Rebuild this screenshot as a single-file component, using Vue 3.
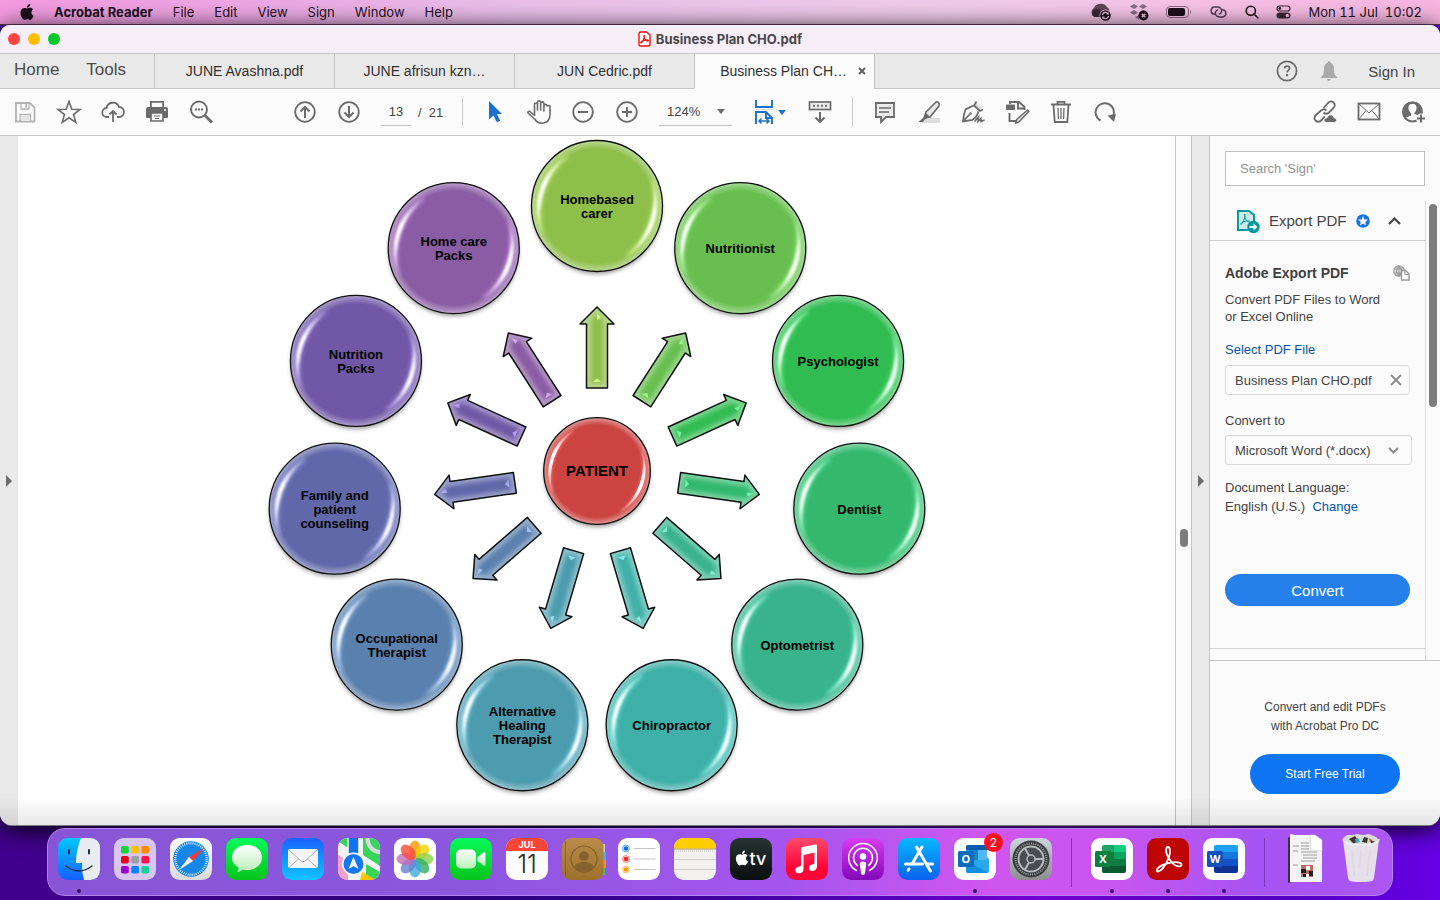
<script setup>
const menus = ['File', 'Edit', 'View', 'Sign', 'Window', 'Help']
const tabs = ['JUNE Avashna.pdf', 'JUNE afrisun kzn…', 'JUN Cedric.pdf']

const nodes = [
  { lines: ['Homebased', 'carer'], color: '#8fbf4b', glow: '#d9ff8a' },
  { lines: ['Nutritionist'], color: '#68bf50', glow: '#a8ff90' },
  { lines: ['Psychologist'], color: '#30bc51', glow: '#7dffa0' },
  { lines: ['Dentist'], color: '#33b86e', glow: '#7dffb8' },
  { lines: ['Optometrist'], color: '#38b38b', glow: '#86ffd8' },
  { lines: ['Chiropractor'], color: '#3fb0a8', glow: '#8cfff6' },
  { lines: ['Alternative', 'Healing', 'Therapist'], color: '#4c9bae', glow: '#9aeaff' },
  { lines: ['Occupational', 'Therapist'], color: '#5a80ae', glow: '#a6d0ff' },
  { lines: ['Family and', 'patient', 'counseling'], color: '#6068a9', glow: '#b0b8ff' },
  { lines: ['Nutrition', 'Packs'], color: '#7058a6', glow: '#c4a8ff' },
  { lines: ['Home care', 'Packs'], color: '#8a5ca4', glow: '#e6b0ff' }
].map((n, i) => {
  const deg = (360 / 11) * i
  const a = (deg * Math.PI) / 180
  return { ...n, deg, x: 265 * Math.sin(a), y: -265 * Math.cos(a) }
})

const petals = ['#ff9500', '#f2d600', '#8fd14f', '#2fae60', '#3fa9e0', '#6a7fd0', '#c06bb5', '#ff4b3a']
const pads = ['#12d636', '#ffbf00', '#ff8a00', '#e5001b', '#9aa0a6', '#ff1250', '#a000d0', '#0a84ff', '#12cf9b']
</script>

<template>
  <div class="desktop">
    <header class="menubar">
      <button class="apple" aria-label="Apple menu">
        <svg width="14" height="16" viewBox="2 0 20 24"><path fill="#1d0f1c" d="M12.152 6.896c-.948 0-2.415-1.078-3.96-1.04-2.04.027-3.91 1.183-4.961 3.014-2.117 3.675-.546 9.103 1.519 12.09 1.013 1.454 2.208 3.09 3.792 3.039 1.52-.065 2.09-.987 3.935-.987 1.831 0 2.35.987 3.96.948 1.637-.026 2.676-1.48 3.676-2.948 1.156-1.688 1.636-3.325 1.662-3.415-.039-.013-3.182-1.221-3.22-4.857-.026-3.04 2.48-4.494 2.597-4.559-1.429-2.09-3.623-2.324-4.39-2.376-2-.156-3.675 1.09-4.61 1.09zM15.53 3.83c.843-1.012 1.4-2.427 1.245-3.83-1.207.052-2.662.805-3.532 1.818-.78.896-1.454 2.338-1.273 3.714 1.338.104 2.715-.688 3.559-1.701" /></svg>
      </button>
      <button class="app-name">Acrobat Reader</button>
      <button v-for="m in menus" :key="m">{{ m }}</button>
      <div class="status">
        <svg width="22" height="18" viewBox="0 0 22 18"><path d="M5 14a5 5 0 0 1-1-9 7 6 0 0 1 13-1 5 5 0 0 1 2 6l-4 4z" fill="#5d4456" /><path d="M2 9a5 4 0 0 1 8-2l5 5-4 2H5a4 4 0 0 1-3-5z" fill="#3a2836" /><circle cx="15.500" cy="12.500" r="6" fill="#f0c6e8" /><circle cx="15.500" cy="12.500" r="5.300" fill="#1d0f1c" /><path d="M12.500 12a3 3 0 0 1 5.500-1.200M18.500 13a3 3 0 0 1-5.500 1.300" fill="none" stroke="#f4c4e8" stroke-width="1.300" /><path d="M18.700 9v2.500h-2.500zM12.300 16v-2.500h2.500z" fill="#f4c4e8" /></svg>
        <svg width="20" height="18" viewBox="0 0 20 18"><g fill="#8d6a85"><path d="M5 1l4 2.500-4 2.500-4-2.500zM14 1l4 2.500-4 2.500-4-2.500zM5 7l4 2.500L5 12 1 9.500zM10 12l-4 2 4 3z" /><path d="M14 7l4 2.500-4 2-4-2z" /></g><circle cx="14.500" cy="12.500" r="5" fill="#1d0f1c" /><path d="M12.700 10.700l3.600 3.600m0-3.600l-3.600 3.600" stroke="#f5bfe5" stroke-width="1.500" /></svg>
        <svg width="26" height="13" viewBox="0 0 26 13"><rect x=".500" y=".500" width="22" height="11" rx="3.500" fill="none" stroke="#8d6581" /><rect x="2" y="2" width="17" height="8" rx="2" fill="#1d0f1c" /><path d="M24 4q2 2 0 4z" fill="#8d6581" /></svg>
        <svg width="19" height="14" viewBox="0 0 19 14" fill="none" stroke="#5b3b53" stroke-width="1.400" stroke-linecap="round"><path d="M5.500 9.300A3.700 3.700 0 0 1 5 2h3.500q3.600.3 4.200 3.300.2 2.900-2.500 3.900" /><path d="M13.500 4.700a3.700 3.700 0 0 1 .500 7.300h-3.500Q6.900 11.700 6.300 8.700q-.2-2.900 2.500-3.900" /></svg>
        <svg width="14" height="14" viewBox="0 0 14 14" fill="none" stroke="#1d0f1c" stroke-width="1.600"><circle cx="5.800" cy="5.800" r="4.600" /><path d="M9 9l4 4" stroke-linecap="round" /></svg>
        <svg width="15" height="14" viewBox="0 0 15 14"><rect x="1" y="1" width="13" height="5" rx="2.500" fill="none" stroke="#3b2437" stroke-width="1.200" /><circle cx="3.800" cy="3.500" r="1.400" fill="#3b2437" /><rect x="0.500" y="7.500" width="14" height="6" rx="3" fill="#3b2437" /><circle cx="11.300" cy="10.500" r="1.700" fill="#f7c0e5" /></svg>
        <time>Mon 11 Jul&nbsp; 10:02</time>
      </div>
    </header>

    <main class="window">
      <div class="titlebar">
        <div class="lights">
          <button class="red" aria-label="Close"></button>
          <button class="amber" aria-label="Minimise"></button>
          <button class="green" aria-label="Zoom window"></button>
        </div>
        <svg width="13" height="16" viewBox="0 0 13 16"><path d="M2.500 1h6l3.500 3v9.500q0 1.500-1.500 1.500h-8Q1 15 1 13.500v-11Q1 1 2.500 1z" fill="#fff" stroke="#f00f0f" stroke-width="1.400" /><path d="M6.300 4.500c-1.200 0 0 3 1.200 4.300 1.300 1.300 3 1.700 3 .8S7.500 8.600 5 9.700s-2.700 2.200-1.900 2.200 3.900-5.500 3.200-7.400z" fill="none" stroke="#f00f0f" stroke-width="1.200" /></svg>
        <h1>Business Plan CHO.pdf</h1>
      </div>

      <nav class="tabs">
        <div class="places"><button>Home</button><button>Tools</button></div>
        <button v-for="t in tabs" :key="t" class="tab">{{ t }}</button>
        <div class="tab active"><button>Business Plan CH…</button>
          <button class="close" aria-label="Close tab"><svg width="8" height="8" viewBox="0 0 8 8"><path d="M1 1l6 6m0-6L1 7" stroke="#5c5c5c" stroke-width="1.800" /></svg></button>
        </div>
        <div class="account">
          <button aria-label="Help"><svg width="22" height="22" viewBox="0 0 22 22" fill="none" stroke="#6a6a6a" stroke-width="1.700"><circle cx="11" cy="11" r="9.600" /><path d="M8.500 8.500q.2-2.300 2.600-2.300 2.500 0 2.500 2.100 0 1.300-1.400 2.200-1.100.7-1.100 2" /><path d="M11.100 14v2.200" stroke-width="2" /></svg></button>
          <button aria-label="Notifications"><svg width="18" height="20" viewBox="0 0 18 20"><path d="M9 0q1.300 0 1.300 1.600Q14 3 14 8q0 5 1.500 6.500L17.500 17H.5l2-2.500Q4 13 4 8q0-5 3.700-6.400Q7.700 0 9 0zM7 18h4q-.3 2-2 2t-2-2z" fill="#a9a9a9" /></svg></button>
          <button class="signin">Sign In</button>
        </div>
      </nav>

      <div class="toolbar">
        <button aria-label="Save"><svg viewBox="0 0 24 24" fill="none" stroke="#b4b4b4" stroke-width="1.800"><path d="M3 3h14l4.500 4.500V21.500H3z" /><path d="M8 3v6h8V3M7 21v-6.500h10.500V21" stroke-width="1.300" /><path d="M13 4v3.500" /><path d="M8 16h9v5H8z" fill="#e4e4e4" stroke="none" /></svg></button>
        <button aria-label="Add to favourites"><svg viewBox="0 0 24 24" fill="none" stroke="#6b6b6b" stroke-width="1.600"><path d="M12 1.500l2.800 7.700 8.200.3-6.500 5 2.300 7.900-6.800-4.600-6.800 4.600 2.300-7.900-6.500-5 8.200-.3z" /></svg></button>
        <button aria-label="Upload"><svg viewBox="0 0 24 24" fill="none" stroke="#6b6b6b" stroke-width="1.800"><path d="M8 17H6a4.500 4.500 0 0 1-.5-9 6.500 6.500 0 0 1 12.500-1 5 5 0 0 1 0 10h-2" /><path d="M12 22V11M8.500 14.500L12 11l3.500 3.500" /></svg></button>
        <button aria-label="Print"><svg viewBox="0 0 24 24" fill="#6b6b6b"><path d="M5 1h14v6H5z M6.800 2.800V7h10.400V2.800z" fill-rule="evenodd" /><path d="M3 7h18q2 0 2 2v8q0 1-1 1H2q-1 0-1-1V9q0-2 2-2z" /><path d="M6 13h12v8H6z" fill="#fbfbfb" stroke="#6b6b6b" stroke-width="1.600" /><path d="M9 16h6M10 18.500h4" stroke="#6b6b6b" stroke-width="1.200" /><circle cx="20" cy="10" r="1" fill="#fbfbfb" /></svg></button>
        <button aria-label="Find text"><svg viewBox="0 0 24 24" fill="none" stroke="#6b6b6b" stroke-width="1.900"><circle cx="10" cy="9.500" r="8" /><path d="M16 15.500l7 7" stroke-width="2.800" /><path d="M6 9.500h2m1 0h2m1 0h2" /></svg></button>

        <button class="page-up" aria-label="Previous page"><svg viewBox="0 0 24 24" fill="none" stroke="#6b6b6b" stroke-width="1.800"><circle cx="12" cy="12" r="9.800" /><path d="M12 18V7M7.500 11.500L12 7l4.500 4.500" stroke-width="2" /></svg></button>
        <button aria-label="Next page"><svg viewBox="0 0 24 24" fill="none" stroke="#6b6b6b" stroke-width="1.800"><circle cx="12" cy="12" r="9.800" /><path d="M12 6v11M7.500 12.500L12 17l4.500-4.500" stroke-width="2" /></svg></button>
        <div class="pages"><input value="13" aria-label="Page number" /><span>/&nbsp; 21</span></div>
        <i class="rule"></i>

        <button aria-label="Select"><svg viewBox="0 0 24 24"><path d="M6 1v18.500l4.500-4 3.300 6.800 3.400-1.600L14 14h5z" fill="#1d70cc" /></svg></button>
        <button aria-label="Pan"><svg viewBox="0 0 24 24" fill="none" stroke="#6b6b6b" stroke-width="1.600" stroke-linecap="round" stroke-linejoin="round"><path d="M7.500 13V4.500a1.500 1.500 0 0 1 3 0V10 2.500a1.500 1.500 0 0 1 3.200 0V10 3.500a1.500 1.500 0 0 1 3.200 0V11 6a1.500 1.500 0 0 1 3.200 0l2-.5q1 0 .9 1.500V15q-.5 8-8 8.200-5 0-7-3.700L1 13q-.5-2 2-1.500l4.500 4z" /></svg></button>
        <button aria-label="Zoom out"><svg viewBox="0 0 24 24" fill="none" stroke="#6b6b6b" stroke-width="1.800"><circle cx="12" cy="12" r="9.800" /><path d="M7 12h10" stroke-width="2" /></svg></button>
        <button aria-label="Zoom in"><svg viewBox="0 0 24 24" fill="none" stroke="#6b6b6b" stroke-width="1.800"><circle cx="12" cy="12" r="9.800" /><path d="M7 12h10M12 7v10" stroke-width="2" /></svg></button>
        <label class="zoom"><select aria-label="Zoom level"><option>124%</option></select><svg class="caret" viewBox="0 0 8 5"><path d="M0 0h8L4 5z" fill="#6b6b6b" /></svg></label>
        <button class="fit" aria-label="Page fit"><svg viewBox="0 0 24 24" fill="none" stroke="#1d70cc" stroke-width="1.900"><path d="M4 0v7h16V0M4 24V12h10l6 6v6M14 12v6h6" /><path d="M7 21h10M9.500 18.500L7 21l2.500 2.500M14.500 18.500L17 21l-2.500 2.500" stroke-width="1.500" /><path d="M4 9.500h16" stroke="#dcdcdc" stroke-width="1.200" /></svg><svg class="caret" viewBox="0 0 8 5"><path d="M0 0h8L4 5z" fill="#1d70cc" /></svg></button>
        <button aria-label="Page display"><svg viewBox="0 0 24 24" fill="none" stroke="#6b6b6b" stroke-width="1.700"><rect x="1.500" y="2" width="21" height="7.500" fill="#ededed" /><path d="M5 5.700h14" stroke-dasharray="2 2" stroke-width="2" /><path d="M12 12v10M7.500 17.500L12 22l4.500-4.500" stroke-width="2" /></svg></button>
        <i class="rule"></i>

        <button aria-label="Comment"><svg viewBox="0 0 24 24" stroke="#6b6b6b" stroke-width="1.800"><path d="M3 3h18v14h-8l-5 5v-5H3z" fill="#ececec" /><path d="M6 8h12M6 12h10" stroke-width="1.300" /></svg></button>
        <button aria-label="Highlight"><svg viewBox="0 0 24 24"><path d="M7 18h16v5H5z" fill="#dedede" /><path d="M9 12L18.500 2.500q1.500-1.500 3 0t.500 3.500L13 17l-5-1z" fill="#e8e8e8" stroke="#6b6b6b" stroke-width="1.600" /><path d="M8.500 12.500l4.800 4.800-5.300 2-2 2.700H1.500L6 18z" fill="#6b6b6b" /></svg></button>
        <button aria-label="Sign"><svg viewBox="0 0 24 24" fill="none" stroke="#6b6b6b" stroke-width="1.800"><path d="M15 2l6.500 6-3 3-5-5z" fill="#dedede" stroke="none" /><path d="M15.500 1.500l-2.500 4 6 5.500 3-1.500" /><path d="M12.500 5.500L4.500 9.500Q2.800 14 2 21.500l9.500-1.700Q16 17 17.500 11.500M2 21.500l6.500-7" /><circle cx="9.500" cy="13.500" r="1.300" fill="#6b6b6b" stroke="none" /><path d="M13.500 21.500l4-4.500-.5 4.500 3-3v3l3.500-1.500" stroke-width="1.600" /></svg></button>
        <button aria-label="Edit PDF"><svg viewBox="0 0 24 24" fill="none" stroke="#6b6b6b" stroke-width="1.900"><path d="M5 4V2h9l5.500 5v3M13 2v6.500h6M4.500 13v8H11" /><rect x="1" y="4.500" width="9" height="5.500" rx="1" fill="#6b6b6b" stroke="none" /><path d="M22.500 10l1.300 1.500-10 10.500-3 1 1-3.500z" fill="#e8e8e8" stroke-width="1.500" /></svg></button>
        <button aria-label="Delete"><svg viewBox="0 0 24 24" fill="none" stroke="#6b6b6b" stroke-width="1.800"><path d="M2 4.500h20M8.500 4V1.800h7V4M4.500 5l1.200 17h12.600l1.200-17" /><path d="M9 8l.4 11M12 8v11M15 8l-.4 11" stroke-width="1.300" /></svg></button>
        <button aria-label="Rotate"><svg viewBox="0 0 24 24" fill="none" stroke="#6b6b6b" stroke-width="2"><path d="M7.500 20.500a9.200 9.200 0 1 1 12.500-4" /><path d="M14.500 15.500l8.500-1.500-2 8z" fill="#6b6b6b" stroke="none" /></svg></button>

        <div class="share">
          <button aria-label="Share link"><svg viewBox="0 0 24 24" fill="none" stroke="#6b6b6b" stroke-width="1.800"><path d="M10.500 8l4.500-5q3-3 5.500-.5t0 5.500L16 12.500q-3 2.500-5.500 0" /><path d="M13.500 10.500q-2.500-2.500-5.500 0L3 15q-3 3-.5 5.500t5.500 0l4-4" /><path d="M13 22.500q-2.500-.5-2-2.800.5-2.200 3-2 1-3.500 4.200-3 2.800.5 3 3 2.800.3 2.500 2.700-.3 2.100-2.200 2.100z" fill="#6b6b6b" stroke="#fbfbfb" stroke-width="1" /></svg></button>
          <button aria-label="Email"><svg viewBox="0 0 24 24" fill="none" stroke="#6b6b6b" stroke-width="1.800"><rect x="1.500" y="3.500" width="21" height="16" /><path d="M2 4l10 9L22 4M2 19l7-8.500M22 19l-7-8.500" stroke-width="1" /></svg></button>
          <button aria-label="Add people"><svg viewBox="0 0 24 24"><circle cx="11.500" cy="12" r="9.500" fill="#fbfbfb" stroke="#6b6b6b" stroke-width="2" /><path d="M2.500 8a9.500 9.500 0 0 1 18 0v8l-4-.8-3.500-1.700q3-3.500 2.500-6.500-.7-3.200-4-3.200T7.500 7q-.5 3 2.500 6.500v2L4.500 18Q1 14 2.500 8z" fill="#6b6b6b" /><circle cx="20" cy="18.500" r="5" fill="#fbfbfb" /><path d="M20 14.500v8M16 18.500h8" stroke="#6b6b6b" stroke-width="2" /></svg></button>
        </div>
      </div>

      <div class="workspace">
        <button class="rail" aria-label="Open navigation pane"><svg width="6" height="12" viewBox="0 0 6 12"><path d="M0 0l6 6-6 6z" fill="#6b6b6b" /></svg></button>
        <section class="page">
          <svg class="diagram" viewBox="-579 -335 1157 689" role="img" aria-label="Patient care network">
            <defs>
              <filter id="soft1" x="-30%" y="-30%" width="160%" height="160%"><feGaussianBlur stdDeviation="0.9" /></filter>
              <filter id="soft2" x="-50%" y="-50%" width="200%" height="200%"><feGaussianBlur stdDeviation="2" /></filter>
              <radialGradient id="rim"><stop offset=".87" stop-color="#fff" stop-opacity="0" /><stop offset="1" stop-color="#fff" stop-opacity=".42" /></radialGradient>
              <linearGradient id="shine" x1="0" y1="0" x2="0" y2="1"><stop offset="0" stop-color="#fff" stop-opacity=".1" /><stop offset=".35" stop-color="#fff" /><stop offset=".6" stop-color="#fff" stop-opacity=".9" /><stop offset="1" stop-color="#fff" stop-opacity="0" /></linearGradient>
              <path id="crescent" d="M-29-50A59 59 0 0 0-55 26A76 76 0 0 1-29-50z" />
              <path id="arrow" d="M0-164L17-147H10.500V-83H-10.500V-147H-17z" />
            </defs>

            <g v-for="n in nodes" :key="n.lines[0]">
              <g :transform="`rotate(${n.deg})`">
                <use href="#arrow" :fill="n.color" />
                <use href="#arrow" fill="#fff" fill-opacity=".35" />
                <path d="M0-157L7-150H6V-88H-6V-150H-7z" :fill="n.color" filter="url(#soft2)" />
                <path d="M0-93l4 4h-8zM0-158l4 5-4 2z" :fill="n.glow" fill-opacity=".8" />
                <use href="#arrow" fill="none" stroke="#111" stroke-width="1.500" stroke-linejoin="round" />
              </g>
              <g :transform="`translate(${n.x} ${n.y})`">
                <circle r="65" cy="3" fill="#000" fill-opacity=".4" filter="url(#soft2)" />
                <circle r="65.500" :fill="n.color" />
                <circle r="65.500" fill="url(#rim)" />
                <g v-for="turn in [0, 180]" :key="turn" :transform="`rotate(${turn})`">
                  <use href="#crescent" :stroke="n.glow" :fill="n.glow" stroke-width="2" opacity=".6" filter="url(#soft2)" />
                  <use href="#crescent" fill="url(#shine)" filter="url(#soft1)" />
                </g>
                <circle r="65.500" fill="none" stroke="#111" stroke-width="1.300" />
                <text v-for="(line, k) in n.lines" :key="line" y="-2" :dy="(k - (n.lines.length - 1) / 2) * 14 + 7">{{ line }}</text>
              </g>
            </g>

            <circle r="53" cy="3" fill="#000" fill-opacity=".4" filter="url(#soft2)" />
            <circle r="53" fill="#cb4441" />
            <circle r="53" fill="url(#rim)" />
            <g v-for="turn in [0, 180]" :key="turn" :transform="`rotate(${turn}) scale(.81)`">
              <use href="#crescent" fill="#ff8a88" stroke="#ff8a88" stroke-width="2" opacity=".6" filter="url(#soft2)" />
              <use href="#crescent" fill="url(#shine)" filter="url(#soft1)" />
            </g>
            <circle r="53.300" fill="none" stroke="#111" stroke-width="1.300" />
            <text y="5" class="hub">PATIENT</text>
          </svg>
        </section>
        <div class="scroll"><i></i></div>
        <button class="rail right" aria-label="Collapse tools pane"><svg width="6" height="12" viewBox="0 0 6 12"><path d="M0 0l6 6-6 6z" fill="#6b6b6b" /></svg></button>

        <aside>
          <input class="search" placeholder="Search 'Sign'" aria-label="Search tools" />
          <div class="pane">
            <div class="pane-main">
              <button class="export-head">
                <svg width="24" height="24" viewBox="0 0 24 24"><path d="M2 2h11l5 4v15H2z" fill="#cfeaea" stroke="#009b9b" stroke-width="2" /><path d="M9 5c-1.500 0 0 5 1.500 6.500s3.500 2 3.500 1-5-.8-7.500.7-2 2.300-1.400 2.300S10 8.500 9 5z" fill="none" stroke="#009b9b" stroke-width="1" /><circle cx="17.500" cy="18" r="6.200" fill="#009b9b" /><path d="M13.500 17h4v-2.500l4 3.500-4 3.500V19h-4z" fill="#fff" /></svg>
                <span>Export PDF</span>
                <svg width="14" height="14" viewBox="0 0 14 14"><circle cx="7" cy="7" r="6.800" fill="#1473e6" /><path d="M7 2l1.400 3.400 3.600.2-2.800 2.300.9 3.600L7 9.500l-3.100 2 .9-3.600L2 5.600l3.600-.2z" fill="#fff" /></svg>
                <svg class="chev" width="13" height="8" viewBox="0 0 13 8"><path d="M1 7l5.500-5.500L12 7" fill="none" stroke="#444" stroke-width="2.200" /></svg>
              </button>
              <div class="export-body">
                <div class="row"><h2>Adobe Export PDF</h2>
                  <svg width="17" height="16" viewBox="0 0 17 16" fill="none" stroke="#9b9b9b" stroke-width="1.100"><circle cx="6" cy="6" r="5.300" fill="#ddd" /><path d="M6 1v10M1 4h10M1 8h10M6 1Q1 6 6 11M6 1q5 5 0 10" /><path d="M8.500 5.500h4l3.500 3.500v6H8.500z" fill="#fbfbfb" stroke-width="1.400" /><path d="M12 6v3.500h3.500" /></svg>
                </div>
                <p>Convert PDF Files to Word<br />or Excel Online</p>
                <a class="select-file" href="#">Select PDF File</a>
                <div class="file"><span>Business Plan CHO.pdf</span><button aria-label="Remove file"><svg width="12" height="12" viewBox="0 0 12 12"><path d="M1 1l10 10m0-10L1 11" stroke="#8c8c8c" stroke-width="2" /></svg></button></div>
                <label for="format">Convert to</label>
                <div class="format"><select id="format"><option>Microsoft Word (*.docx)</option></select><svg width="11" height="7" viewBox="0 0 11 7"><path d="M1 1l4.500 4.500L10 1" fill="none" stroke="#8c8c8c" stroke-width="2" /></svg></div>
                <p class="lang">Document Language:<br />English (U.S.)&nbsp; <a href="#">Change</a></p>
                <button class="convert">Convert</button>
              </div>
            </div>
            <div class="pane-scroll"><i></i></div>
          </div>
          <div class="trial"><p>Convert and edit PDFs<br />with Acrobat Pro DC</p><button>Start Free Trial</button></div>
        </aside>
      </div>
    </main>

    <footer>
      <svg class="defs" width="0" height="0"><defs>
        <linearGradient id="gFinder" x2="0" y2="1"><stop stop-color="#00c8ff" /><stop offset="1" stop-color="#1560ff" /></linearGradient>
        <linearGradient id="gGreen" x2="0" y2="1"><stop stop-color="#06fa5c" /><stop offset="1" stop-color="#06c41a" /></linearGradient>
        <linearGradient id="gMail" x2="0" y2="1"><stop stop-color="#1a62fa" /><stop offset="1" stop-color="#10c4ff" /></linearGradient>
        <linearGradient id="gWhite" x2="0" y2="1"><stop stop-color="#fff" /><stop offset="1" stop-color="#dadada" /></linearGradient>
        <linearGradient id="gBubble" x2="0" y2="1"><stop stop-color="#fff" /><stop offset="1" stop-color="#b9f0b9" /></linearGradient>
        <linearGradient id="gMusic" x2="0" y2="1"><stop stop-color="#ff4a6b" /><stop offset=".7" stop-color="#ff0436" /></linearGradient>
        <linearGradient id="gPod" x2="0" y2="1"><stop stop-color="#d83cf2" /><stop offset="1" stop-color="#8308b8" /></linearGradient>
        <linearGradient id="gStore" x2="0" y2="1"><stop stop-color="#06b8fc" /><stop offset="1" stop-color="#0a62ee" /></linearGradient>
        <linearGradient id="gTv" x2="0" y2="1"><stop stop-color="#263431" /><stop offset="1" stop-color="#0a0f0f" /></linearGradient>
        <linearGradient id="gBrown" x2="0" y2="1"><stop stop-color="#b98d49" /><stop offset="1" stop-color="#9d702c" /></linearGradient>
        <linearGradient id="gSet" x2="0" y2="1"><stop stop-color="#cbd5dc" /><stop offset="1" stop-color="#8d8d90" /></linearGradient>
        <clipPath id="tile"><rect width="42" height="42" rx="9.500" /></clipPath>
      </defs></svg>
      <nav class="dock" aria-label="Dock">
        <button class="running" aria-label="Finder"><svg viewBox="0 0 42 42"><g clip-path="url(#tile)"><path d="M0 0h42v42H0z" fill="url(#gFinder)" /><path d="M23 0q-5 12-5 25h6q-.5 9 2 17h16V0z" fill="#e9edf2" /></g><path d="M11 12v3.500M31 12v3.500" stroke="#18304d" stroke-width="2" stroke-linecap="round" /><path d="M8 28q13 10 26 0" fill="none" stroke="#18304d" stroke-width="1.400" stroke-linecap="round" /></svg></button>
        <button aria-label="Launchpad"><svg viewBox="0 0 42 42"><rect width="42" height="42" rx="9.500" fill="#d7c6ef" /><rect v-for="(c, i) in pads" :key="i" :x="7 + (i % 3) * 10.2" :y="8 + Math.floor(i / 3) * 10" width="7.800" height="7.500" rx="1.800" :fill="c" /></svg></button>
        <button aria-label="Safari"><svg viewBox="0 0 42 42"><rect width="42" height="42" rx="9.500" fill="url(#gWhite)" /><circle cx="21" cy="21" r="17.800" fill="#1686e8" /><circle cx="21" cy="21" r="15.800" fill="none" stroke="#fff" stroke-width="2.400" stroke-dasharray=".8 1.300" /><path d="M34 10L23 23l-4-4z" fill="#fa3a30" /><path d="M9 32l10-13 4 4z" fill="#fff" /></svg></button>
        <button aria-label="Messages"><svg viewBox="0 0 42 42"><rect width="42" height="42" rx="9.500" fill="url(#gGreen)" /><path d="M21 7c9 0 15 5.500 15 12.500S30 32 21 32q-2.500 0-4.500-.6Q14 34 11 34q2-2 1.500-4.500Q6 26 6 19.500C6 12.500 12 7 21 7z" fill="url(#gBubble)" /></svg></button>
        <button aria-label="Mail"><svg viewBox="0 0 42 42"><rect width="42" height="42" rx="9.500" fill="url(#gMail)" /><rect x="6" y="11" width="30" height="19" rx="2" fill="#f4f5f7" /><path d="M7 12l12 11q2 1.500 4 0l12-11M7 29.500l10-9M35 29.500l-10-9" fill="none" stroke="#aab1b8" stroke-width="1" /></svg></button>
        <button aria-label="Maps"><svg viewBox="0 0 42 42"><g clip-path="url(#tile)"><path d="M0 0h42v42H0z" fill="#f2f2f4" /><path d="M0 0h10v10L0 3zM25 0h17v28L25 17z" fill="#37d65b" /><path d="M30-2a13 13 0 0 0 14 16" fill="none" stroke="#d9dde0" stroke-width="4" /><path d="M0 17l10 6v19H0z" fill="#f79fca" /><path d="M28 26l14 8v8H28z" fill="#37d65b" /><path d="M24 34l14 8H22z" fill="#ffc400" /><path d="M10 0h11v20H10z" fill="#1273f0" /><path d="M10 0v20M21 0v20" stroke="#fff" stroke-width="1.500" /></g><circle cx="15.500" cy="26" r="10.800" fill="#1677f2" stroke="#fff" stroke-width="1.500" /><path d="M15.500 19l5 12-5-3-5 3z" fill="#fff" /></svg></button>
        <button aria-label="Photos"><svg viewBox="0 0 42 42"><rect width="42" height="42" rx="9.500" fill="#fff" /><ellipse v-for="(c, i) in petals" :key="c" cx="21" cy="11.500" rx="6" ry="9" :fill="c" fill-opacity=".8" :transform="`rotate(${i * 45} 21 21)`" /></svg></button>
        <button aria-label="FaceTime"><svg viewBox="0 0 42 42"><rect width="42" height="42" rx="9.500" fill="url(#gGreen)" /><rect x="6" y="11.500" width="20" height="19" rx="5" fill="url(#gBubble)" /><path d="M27.500 19l6-4.500q2-1 2 1v11q0 2-2 1l-6-4.500z" fill="url(#gBubble)" /></svg></button>
        <button class="calendar" aria-label="Calendar"><b>JUL</b><span>11</span></button>
        <button aria-label="Contacts"><svg viewBox="0 0 42 42"><path d="M36 6h7v8h-7z" fill="#ccc" /><path d="M36 14h8v8h-8z" fill="#42b8ea" /><path d="M36 22h8v8h-8z" fill="#ff8a1d" /><path d="M36 30h7v7h-7z" fill="#35c759" /><rect width="41.500" height="42" rx="9" fill="url(#gBrown)" /><path d="M3.500 3v36" stroke="#8b6124" /><g fill="none" stroke="#80602c" stroke-width="1.200"><circle cx="22" cy="21" r="13" /></g><circle cx="22" cy="18" r="4.800" fill="#86632c" /><path d="M12 29q3-5 10-5t10 5q-4 5-10 5t-10-5z" fill="#86632c" /></svg></button>
        <button aria-label="Reminders"><svg viewBox="0 0 42 42"><rect width="42" height="42" rx="9.500" fill="#fff" /><g stroke="#c5c5c8"><path d="M16 10.500h21.500M16 21h21.500M16 31.500h21.500" /></g><g fill="none" stroke-width="1"><circle cx="8" cy="10.500" r="3.400" stroke="#5ca1ff" /><circle cx="8" cy="21" r="3.400" stroke="#ff7069" /><circle cx="8" cy="31.500" r="3.400" stroke="#ffb95a" /></g><circle cx="8" cy="10.500" r="2.300" fill="#0a6cff" /><circle cx="8" cy="21" r="2.300" fill="#fa2420" /><circle cx="8" cy="31.500" r="2.300" fill="#ff9500" /></svg></button>
        <button aria-label="Notes"><svg viewBox="0 0 42 42"><g clip-path="url(#tile)"><path d="M0 0h42v42H0z" fill="#f3f1ee" /><path d="M0 0h42v10.500H0z" fill="#ffce00" /><path d="M0 11h42" stroke="#b99a3c" /><path d="M0 13h42" stroke="#bbb" stroke-width=".8" stroke-dasharray="1 1" /><path d="M0 21.500h42M0 31.500h42" stroke="#d0cfcc" /></g></svg></button>
        <button aria-label="Apple TV"><svg viewBox="0 0 42 42"><rect width="42" height="42" rx="9.500" fill="url(#gTv)" /><path transform="translate(4.500 12.500) scale(.62)" fill="#fff" d="M12.152 6.896c-.948 0-2.415-1.078-3.96-1.04-2.04.027-3.91 1.183-4.961 3.014-2.117 3.675-.546 9.103 1.519 12.09 1.013 1.454 2.208 3.09 3.792 3.039 1.52-.065 2.09-.987 3.935-.987 1.831 0 2.35.987 3.96.948 1.637-.026 2.676-1.48 3.676-2.948 1.156-1.688 1.636-3.325 1.662-3.415-.039-.013-3.182-1.221-3.22-4.857-.026-3.04 2.48-4.494 2.597-4.559-1.429-2.09-3.623-2.324-4.39-2.376-2-.156-3.675 1.09-4.61 1.09zM15.53 3.83c.843-1.012 1.4-2.427 1.245-3.83-1.207.052-2.662.805-3.532 1.818-.78.896-1.454 2.338-1.273 3.714 1.338.104 2.715-.688 3.559-1.701" /><text x="28" y="27" class="tv">tv</text></svg></button>
        <button aria-label="Music"><svg viewBox="0 0 42 42"><rect width="42" height="42" rx="9.500" fill="url(#gMusic)" /><path d="M15 11q0-1.500 1.500-2l13-2.500q1.500-.2 1.500 1.300V28q0 4.500-4.500 5-3.500 0-3.500-3 0-3.300 4-3.800 1.500-.2 1.500-1.700V14.500L17.500 17v14q0 4-4.500 4.300-3.700 0-3.700-3 0-3 4.200-3.700 1.500-.3 1.500-1.600z" fill="#fff" /></svg></button>
        <button aria-label="Podcasts"><svg viewBox="0 0 42 42"><rect width="42" height="42" rx="9.500" fill="url(#gPod)" /><g fill="none" stroke="#fff" stroke-width="1.500" stroke-linecap="round"><path d="M14.500 32.500a14.300 14.300 0 1 1 13 0" /><path d="M15.500 27.500a9.500 9.500 0 1 1 11 0" /></g><circle cx="21" cy="18.500" r="3.300" fill="#fff" /><path d="M17.800 26q0-2.500 3.200-2.500t3.200 2.500L23 35q-.4 2-2 2t-2-2z" fill="#fff" /></svg></button>
        <button aria-label="App Store"><svg viewBox="0 0 42 42"><rect width="42" height="42" rx="9.500" fill="url(#gStore)" /><g stroke="#fff" stroke-width="3" stroke-linecap="round"><path d="M24 9L14 26M18.500 9l14 24M7.500 26h17M29.500 26h5M11 31l-.8 1.200" /></g></svg></button>
        <button class="running" aria-label="Outlook"><svg viewBox="0 0 42 42"><rect width="42" height="42" rx="9.500" fill="#fff" /><path d="M14 7h17q2 0 2 2v10l2 2v12q0 2-2 2H14q-2 0-2-2V9q0-2 2-2z" fill="#29a8ea" /><path d="M12 9q0-2 2-2h17q2 0 2 2v3H12z" fill="#0a5cab" /><path d="M24 12h9v10h-9z" fill="#50b8f2" /><path d="M15 12h9v10h-9z" fill="#1480d0" /><path d="M12 22l22 13H14q-2 0-2-2z" fill="#1390df" /><rect x="4" y="13" width="16" height="16" rx="1.600" fill="#0f6cbd" /><text x="12" y="25" class="office">O</text></svg><span class="badge">2</span></button>
        <button aria-label="System Preferences"><svg viewBox="0 0 42 42"><rect width="42" height="42" rx="9.500" fill="url(#gSet)" /><circle cx="21" cy="21" r="18.500" fill="#3b3d40" /><circle cx="21" cy="21" r="15.500" fill="none" stroke="#8f9296" stroke-width="2" stroke-dasharray="1.200 1" /><circle cx="21" cy="21" r="12.500" fill="#4b4d50" stroke="#b8bbbe" stroke-width="2" /><path d="M21 21h12M21 21l-6-10.500M21 21l-6 10.500" stroke="#b8bbbe" stroke-width="2" /><circle cx="21" cy="21" r="4" fill="#4b4d50" stroke="#b8bbbe" stroke-width="1.500" /></svg></button>
        <i class="divider"></i>
        <button class="running" aria-label="Excel"><svg viewBox="0 0 42 42"><rect width="42" height="42" rx="9.500" fill="#fff" /><path d="M11 9q0-2 2-2h10v28H13q-2 0-2-2z" fill="#21a366" /><path d="M23 7h10q2 0 2 2v5H23z" fill="#12cf80" /><path d="M11 14h12v7H11z" fill="#107c41" /><path d="M23 14h12v7H23z" fill="#0ba45c" /><path d="M11 21h24v7H11z" fill="#107c41" /><path d="M11 28h24v5q0 2-2 2H13q-2 0-2-2z" fill="#0a5c30" /><rect x="4" y="13" width="16" height="16" rx="1.600" fill="#0d8040" /><text x="12" y="25" class="office">X</text></svg></button>
        <button class="running" aria-label="Acrobat Reader"><svg viewBox="0 0 42 42"><rect width="42" height="42" rx="9.500" fill="#bd0505" /><path d="M22 19.500C24 13 22.800 9 21 9s-3.500 4 1 11.500c3.500 5.500 8 8.500 11 7.800s2-4-4-4.100c-6 0-13.500 2-16.500 4.600s-3.500 4.700-1.500 4.700 6.500-3.500 11-14z" fill="none" stroke="#fff" stroke-width="1.800" stroke-linejoin="round" /></svg></button>
        <button class="running" aria-label="Word"><svg viewBox="0 0 42 42"><rect width="42" height="42" rx="9.500" fill="#fff" /><path d="M11 14V9q0-2 2-2h20q2 0 2 2v5z" fill="#20a0f5" /><path d="M11 14h24v7H11z" fill="#1477dc" /><path d="M11 21h24v7H11z" fill="#1252c8" /><path d="M11 28h24v5q0 2-2 2H13q-2 0-2-2z" fill="#103290" /><rect x="4" y="13" width="16" height="16" rx="1.600" fill="#1550bd" /><text x="12" y="25" class="office">W</text></svg></button>
        <i class="divider"></i>
        <button aria-label="Downloads"><svg viewBox="0 0 42 42"><path d="M4 0v45l4-1V-3z" fill="#333" /><path d="M6-4l5 1h20l7 5v42H6z" fill="#f4f4f4" /><path d="M26-3l1 15 11 1V2l-7-5z" fill="#fff" stroke="#ccc" stroke-width=".6" /><g stroke="#777" stroke-width=".7"><path d="M17 5h8M9 8h6M17 8h8M17 11h8M17 14h16M19 17h14M19 20h14M17 23h14M9 13h5M9 27h5" /></g><path d="M17 27h12v12H17z" fill="#bd6a61" /><path d="M17 31h5v4h-5zM25 33h4v5h-4zM19 36h3v3h-3z" fill="#222" /><path d="M22 28h4v4h-4zM22 36h3v3h-3z" fill="#fff" /></svg></button>
        <button aria-label="Trash"><svg viewBox="0 0 42 42"><path d="M3 0l4-3h5l5-1 6 1 6-1 7 3 3 3-4 6H7z" fill="#d9d9d9" /><path d="M9 1l6-3 3 4-4 4zM24-1l4 1-1 5-5-1zM31 2l4 2-4 2z" fill="#40342f" /><path d="M15 1l3-1 2 4-4 1z" fill="#46a6b3" /><path d="M29 0l3 2-2 3z" fill="#b95d3d" /><path d="M3 2q18 9 36 0l-5 38q-.5 3-4 3.500-9 1-18 0-3.500-.5-4-3.500z" fill="#e7e6ea" fill-opacity=".96" /><path d="M3 1q0 5 18 5.500T39 1" fill="none" stroke="#f4f4f6" stroke-width="1.200" /><path d="M12 12l2 26M30 12l-3 26M21 12l-2 18" stroke="#dddbe0" stroke-width="2" /></svg></button>
      </nav>
    </footer>
  </div>
</template>

<style>
html, body { margin: 0; background: #37008d; }
</style>

<style scoped>
.desktop { height: 100vh; min-height: 700px; display: flex; flex-direction: column; overflow: hidden; color: #444; font-family: "Liberation Sans", Arial, sans-serif; font-size: 13px; background: linear-gradient(90deg, #42008f, #2d0078 30%, #31008a 40%, #5500bb 62%, #7600d2 72%, #5200bd 87%, #6500e4); }
button { margin: 0; padding: 0; border: 0; background: none; color: inherit; font: inherit; white-space: nowrap; }
svg { display: block; flex: none; overflow: visible; }
a { color: #0654a8; text-decoration: none; }
p, h1, h2 { margin: 0; }
input, select { box-sizing: border-box; min-width: 0; margin: 0; padding: 0; border: 0; border-radius: 0; appearance: none; background: none; color: inherit; font: inherit; }

.menubar { flex: none; height: 24px; display: flex; align-items: center; gap: 20px; padding: 0 18px 0 20px; color: #1d0f1c; font-family: Inter, sans-serif; background: linear-gradient(90deg, #f29bdf, #eba9e4 20%, #e9bfe9 35%, #efcde9 66%, #f6c0e5 85%, #f7b5df); border-bottom: 1px solid #5d3758; }
.apple { width: 14px; }
.app-name { font-weight: 700; }
.status { margin-left: auto; display: flex; align-items: center; gap: 17px; font-variant-numeric: tabular-nums; }

.window { position: relative; flex: 1; min-height: 0; display: flex; flex-direction: column; overflow: hidden; border-radius: 10px 10px 12px 12px; background: #fbfbfb; box-shadow: 0 1px 0 #777, 0 4px 24px #000; }
.window::after { content: ""; position: absolute; left: 0; right: 0; bottom: 0; height: 28px; background: linear-gradient(transparent, rgba(0, 0, 0, .09)); pointer-events: none; }
.titlebar { flex: none; position: relative; height: 28px; display: flex; align-items: center; justify-content: center; gap: 5px; background: #f7eff7; border-bottom: 1px solid #c9c5c9; }
h1 { color: #4a454a; font: 700 13px Inter, sans-serif; }
.lights { position: absolute; left: 8px; display: flex; gap: 8px; }
.lights button { width: 12px; height: 12px; border-radius: 50%; }
.red { background: #ff453e; }
.amber { background: #ffbc00; }
.green { background: #05c929; }

.tabs { flex: none; height: 35px; display: flex; background: #e9e9e9; font-size: 14px; color: #303030; }
.places { box-sizing: border-box; width: 154px; display: flex; align-items: center; gap: 27px; padding: 0 0 3px 14px; color: #4b4b4b; font-size: 17px; border-bottom: 1px solid #c8c8c8; }
.tab { box-sizing: border-box; flex: 0 1 180px; border-left: 1px solid #c4c4c4; border-bottom: 1px solid #c8c8c8; }
.tab.active { display: flex; align-items: center; justify-content: flex-end; gap: 11px; padding-right: 8px; background: #fbfbfb; border-bottom-color: #fbfbfb; }
.account { flex: 1; display: flex; align-items: center; justify-content: flex-end; gap: 22px; padding-right: 25px; border-left: 1px solid #c4c4c4; border-bottom: 1px solid #c8c8c8; }
.signin { margin-left: 8px; font-size: 15px; color: #444; }

.toolbar { flex: none; height: 46px; display: flex; align-items: center; padding: 0 5px 0 3px; border-bottom: 1px solid #c8c8c8; background: #fbfbfb; }
.toolbar button { flex: 0 0 44px; display: flex; justify-content: center; }
.toolbar svg { width: 24px; height: 24px; }
.toolbar .caret { width: 8px; height: 5px; }
.toolbar .page-up { margin-left: 60px; }
.pages { display: flex; align-items: center; gap: 7px; width: 81px; margin-left: 10px; }
.pages input { width: 30px; height: 27px; text-align: center; border-bottom: 1px solid #c4c4c4; }
.rule { width: 1px; height: 28px; margin-right: 10px; background: #c8c8c8; }
.zoom { box-sizing: border-box; display: flex; align-items: center; width: 73px; height: 27px; margin: 0 10px; border-bottom: 1px solid #c4c4c4; }
.zoom select { flex: 1; padding-left: 8px; }
.zoom svg { margin-right: 7px; }
.toolbar .fit { flex-basis: 56px; align-items: center; gap: 2px; justify-content: flex-start; padding-left: 10px; }
.fit + button { margin-right: 10px; }
.share { margin-left: auto; display: flex; }
.share button { width: 44px; }

.workspace { flex: 1; min-height: 0; display: flex; }
.rail { width: 18px; display: flex; align-items: center; justify-content: center; background: #e9e9e9; }
.rail.right { box-sizing: border-box; width: 19px; border: solid #c4c4c4; border-width: 0 1px; }
.page { flex: 1; min-width: 0; background: #fff; border-right: 1px solid #c4c4c4; }
.diagram { width: 100%; height: 100%; overflow: hidden; }
.diagram text { text-anchor: middle; fill: #000; font-weight: 700; font-size: 13px; }
.diagram .hub { font-size: 15px; }
.scroll { width: 15px; display: flex; flex-direction: column; align-items: center; }
.scroll i { width: 8px; height: 18px; margin-top: 393px; border-radius: 4px; background: #7d7d7d; }

aside { width: 230px; display: flex; flex-direction: column; background: #fbfbfb; }
.search { flex: none; height: 35px; margin: 15px; padding: 0 14px; border: 1px solid #c0c0c0; background: #fff; }
.search::placeholder { color: #929292; opacity: 1; }
.pane { flex: 1; min-height: 0; display: flex; overflow: hidden; border-bottom: 1px solid #c8c8c8; }
.pane-main { flex: 1; border-right: 1px solid #dedede; }
.export-head { width: 100%; height: 40px; display: flex; align-items: center; gap: 9px; padding: 0 24px 0 26px; font-size: 15px; color: #444; border-bottom: 1px solid #cfcfcf; }
.export-head .chev { margin-left: auto; }
.export-body { padding: 24px 15px 42px; border-bottom: 1px solid #d4d4d4; display: flex; flex-direction: column; }
.row { display: flex; justify-content: space-between; }
h2 { font-size: 14px; line-height: 16px; color: #3f3f3f; }
.export-body p { margin-top: 10px; line-height: 17px; }
.select-file { margin-top: 17px; line-height: 16px; }
.file, .format { box-sizing: border-box; height: 30px; display: flex; align-items: center; justify-content: space-between; margin-top: 7px; padding: 0 7px 0 9px; border: 1px solid #dadada; border-radius: 3px; }
.export-body label { margin-top: 18px; line-height: 16px; }
.format { position: relative; margin-top: 6px; margin-right: -2px; }
.format select { flex: 1; }
.format svg { margin-right: 5px; }
.export-body .lang { margin-top: 13px; line-height: 19px; }
.convert { height: 32px; margin-top: 58px; border-radius: 16px; background: #2680eb; color: #fff; font-size: 15px; }
.pane-scroll { width: 14px; display: flex; justify-content: center; }
.pane-scroll i { width: 8px; height: 203px; margin-top: 3px; border-radius: 4px; background: #7d7d7d; }
.trial { height: 164px; display: flex; flex-direction: column; align-items: center; font-size: 12px; text-align: center; }
.trial p { margin-top: 37px; line-height: 19px; }
.trial button { width: 150px; height: 40px; margin-top: 18px; border-radius: 20px; background: #0d75f2; color: #fff; }

footer { flex: none; padding: 3px 0 4px; display: flex; justify-content: center; }
.defs { position: absolute; }
.dock { box-sizing: border-box; height: 68px; display: flex; align-items: flex-start; gap: 14px; padding: 9px 10px; border: 1px solid #b483eb; border-radius: 18px; background: linear-gradient(90deg, #8755d5, #8c57dd 30%, #a555ee 55%, #cf56ef 70%, #c655ee 80%, #a654f3 90%, #ac56f3); position: relative; }
.dock button { position: relative; width: 42px; height: 42px; }
.dock button svg { width: 42px; height: 42px; }
.divider { width: 1px; height: 49px; margin: 0 5px; background: #8138b5; }
.running::after { content: ""; position: absolute; left: 19px; top: 51px; width: 4px; height: 4px; border-radius: 2px; background: #390b70; }
.badge { position: absolute; right: -7px; top: -5px; width: 19px; height: 19px; border-radius: 10px; background: #fc1020; color: #fff; font: 12px/19px Inter, sans-serif; text-align: center; }
.dock .calendar { display: flex; flex-direction: column; overflow: hidden; border-radius: 10px; background: #fbfbfb; font-family: Inter, sans-serif; }
.calendar b { background: #fb4438; color: #fff; font-size: 9px; line-height: 13px; }
.calendar span { color: #2b2b2b; font-size: 25px; font-weight: 300; line-height: 27px; }
.tv { text-anchor: middle; fill: #fff; font: 500 18px Inter, sans-serif; }
.office { text-anchor: middle; fill: #fff; font: 700 11px "Open Sans", sans-serif; }
</style>
